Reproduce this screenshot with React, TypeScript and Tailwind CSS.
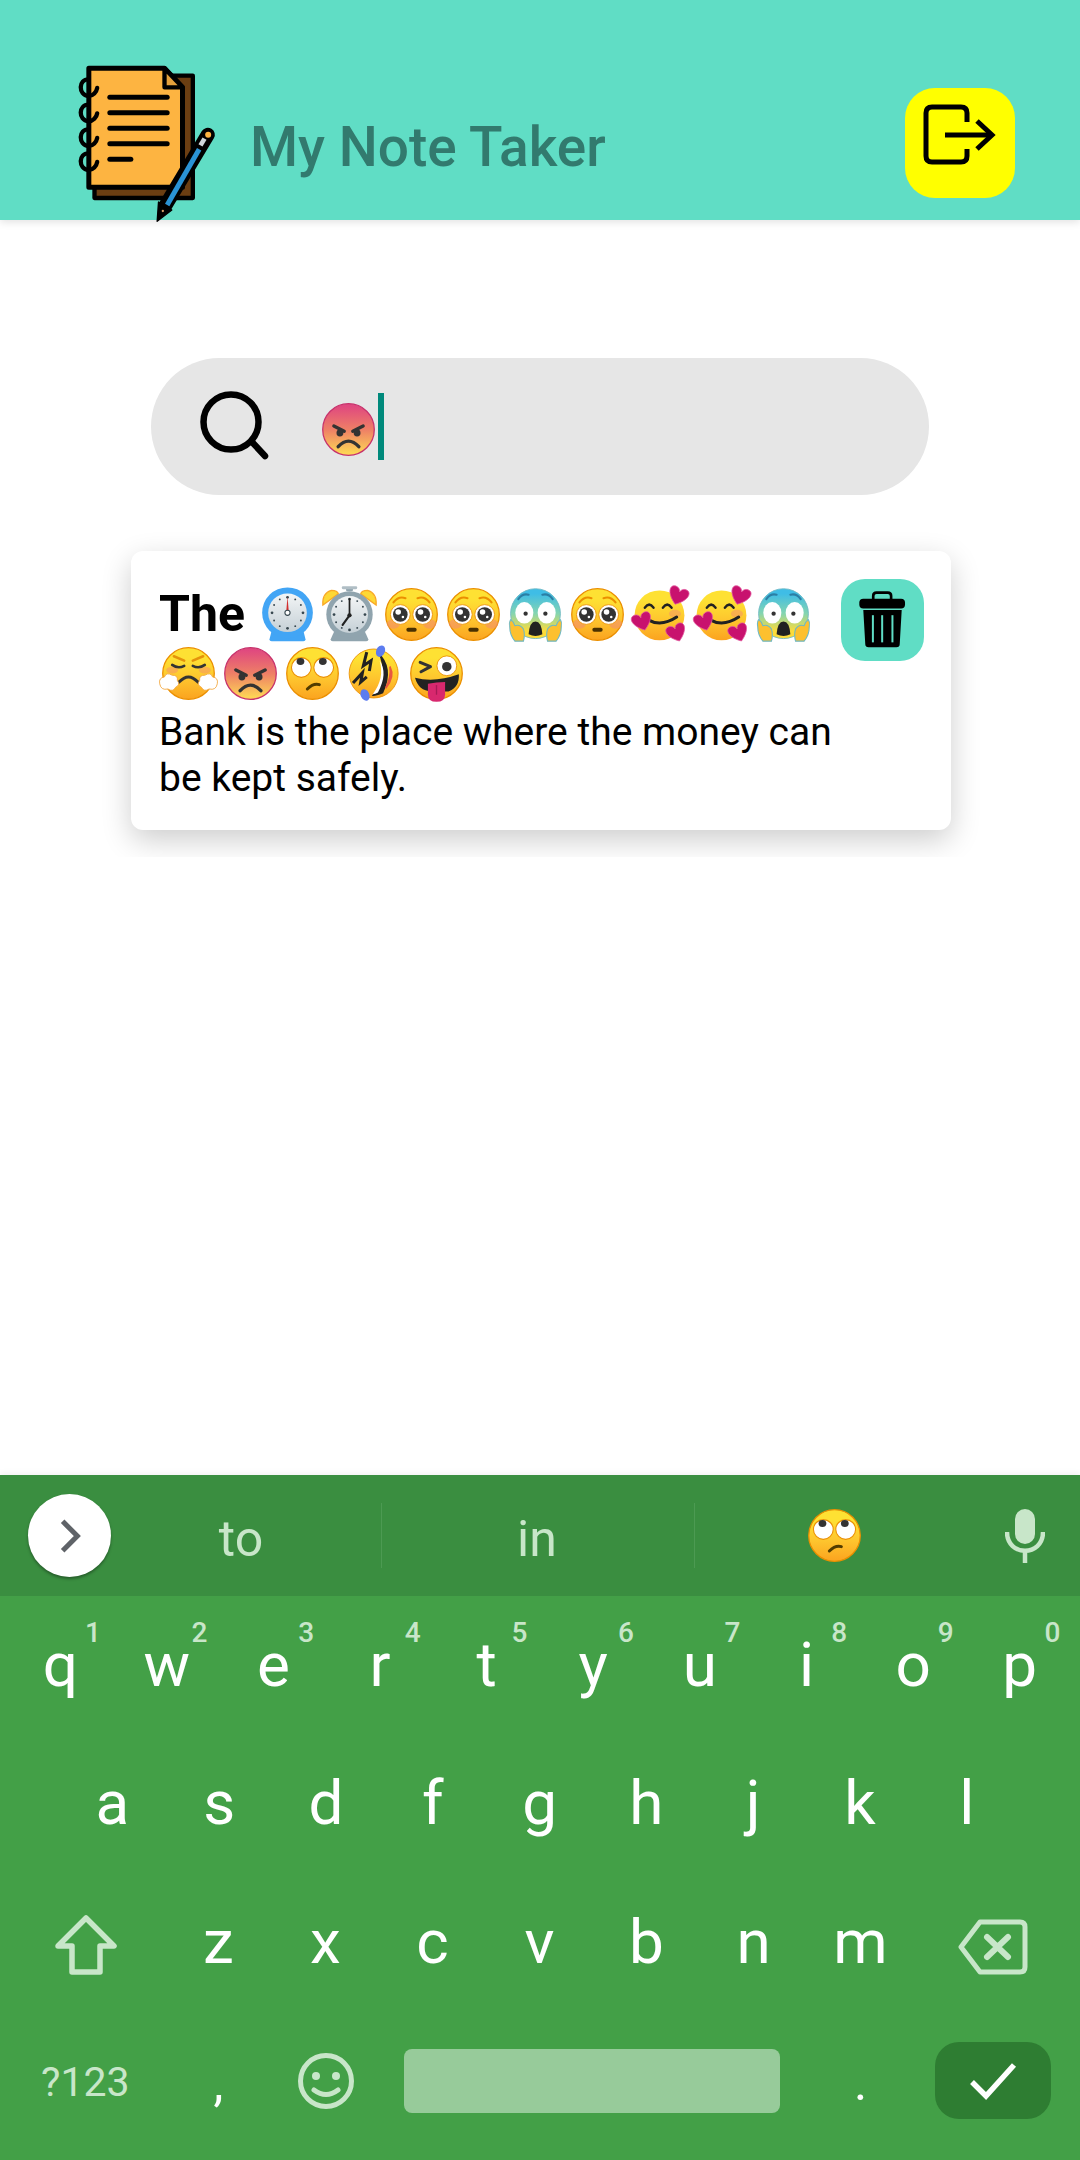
import React from "react";

const Defs = () => (
  <defs>
    <linearGradient id="yel" x1="0" y1="0" x2="0" y2="1">
      <stop offset="0.2" stopColor="#fee133" />
      <stop offset="0.6" stopColor="#fec52e" />
      <stop offset="1" stopColor="#fba31f" />
    </linearGradient>
    <linearGradient id="ang" x1="0" y1="0" x2="0" y2="1">
      <stop offset="0.05" stopColor="#e0497f" />
      <stop offset="0.5" stopColor="#ee7f66" />
      <stop offset="0.95" stopColor="#fdd356" />
    </linearGradient>
    <linearGradient id="fear" x1="0" y1="0" x2="0" y2="1">
      <stop offset="0.1" stopColor="#3fbde6" />
      <stop offset="0.5" stopColor="#85d5b0" />
      <stop offset="0.85" stopColor="#fddc3a" />
    </linearGradient>
    <linearGradient id="steel" x1="0" y1="0" x2="0" y2="1">
      <stop offset="0" stopColor="#f3f5f6" />
      <stop offset="1" stopColor="#c5d0d6" />
    </linearGradient>
  </defs>
);

const E = ({ children, c = "w-[55px] h-[55px]" }: { children: React.ReactNode; c?: string }) => (
  <svg viewBox="0 0 128 128" className={c + " shrink-0 overflow-visible"}>
    <Defs />
    {children}
  </svg>
);

const Face = ({ fill = "url(#yel)", stroke = "#eb8f00" }: { fill?: string; stroke?: string }) => (
  <circle cx="64" cy="64" r="60" fill={fill} stroke={stroke} strokeWidth="3" />
);

const Ticks = ({ cx, cy, r }: { cx: number; cy: number; r: number }) => (
  <g fill="#37474f">
    {Array.from({ length: 12 }).map((_, i) => {
      const a = (i * Math.PI) / 6;
      return <circle key={i} cx={cx + Math.sin(a) * r} cy={cy - Math.cos(a) * r} r={i % 3 === 0 ? 3.2 : 2.2} />;
    })}
  </g>
);

const Mantel = () => (
  <E>
    <path d="M28 98 L22 122 Q22 126 27 126 H101 Q106 126 106 122 L100 98 Z" fill="#42a5f5" />
    <circle cx="64" cy="60" r="59" fill="#42a5f5" />
    <circle cx="64" cy="60" r="45" fill="url(#steel)" />
    <Ticks cx={64} cy={60} r={36} />
    <path d="M64 22 L61 58 H67 Z" fill="#d32f2f" />
    <circle cx="64" cy="60" r="6" fill="#fff" stroke="#37474f" strokeWidth="2.5" />
  </E>
);

const Alarm = () => (
  <E>
    <rect x="56" y="0" width="16" height="10" rx="3" fill="#90a4ae" />
    <rect x="46" y="-2" width="36" height="7" rx="3" fill="#b0bec5" />
    <path d="M2 42 Q0 14 22 8 Q36 8 38 16 Z" fill="#fdd835" stroke="#f9a825" strokeWidth="3" />
    <path d="M126 42 Q128 14 106 8 Q92 8 90 16 Z" fill="#fdd835" stroke="#f9a825" strokeWidth="3" />
    <path d="M28 104 L20 122 Q20 126 25 126 H103 Q108 126 108 122 L100 104 Z" fill="#90a4ae" />
    <circle cx="64" cy="64" r="54" fill="#90a4ae" />
    <circle cx="64" cy="64" r="43" fill="url(#steel)" />
    <Ticks cx={64} cy={64} r={36} />
    <path d="M64 66 V28" stroke="#212121" strokeWidth="4" strokeLinecap="round" />
    <path d="M64 66 L48 88" stroke="#212121" strokeWidth="5" strokeLinecap="round" />
    <circle cx="64" cy="66" r="5" fill="#212121" />
  </E>
);

const BigEye = ({ x }: { x: number }) => (
  <g>
    <circle cx={x} cy="64" r="23" fill="#fff" stroke="#eb8f00" strokeWidth="2" />
    <circle cx={x} cy="64" r="17" fill="#333" />
    <circle cx={x - 5} cy="58" r="6.5" fill="#fff" />
    <circle cx={x + 6} cy="70" r="3" fill="#fff" />
  </g>
);

const Pleading = () => (
  <E>
    <Face />
    <ellipse cx="22" cy="86" rx="15" ry="11" fill="#f48f6c" opacity="0.6" />
    <ellipse cx="106" cy="86" rx="15" ry="11" fill="#f48f6c" opacity="0.6" />
    <path d="M22 36 Q34 20 50 26" fill="none" stroke="#eb8f00" strokeWidth="5" strokeLinecap="round" />
    <path d="M106 36 Q94 20 78 26" fill="none" stroke="#eb8f00" strokeWidth="5" strokeLinecap="round" />
    <BigEye x={38} />
    <BigEye x={90} />
    <rect x="52" y="95" width="24" height="9" rx="4.5" fill="#4a3000" />
  </E>
);

const Fear = () => (
  <E>
    <circle cx="64" cy="62" r="58" fill="url(#fear)" stroke="#6fb8c4" strokeWidth="2" />
    <ellipse cx="38" cy="60" rx="21" ry="25" fill="#fff" />
    <ellipse cx="90" cy="60" rx="21" ry="25" fill="#fff" />
    <circle cx="41" cy="62" r="5" fill="#333" />
    <circle cx="87" cy="62" r="5" fill="#333" />
    <path d="M24 28 Q34 14 48 18" fill="none" stroke="#2b7fa5" strokeWidth="5" strokeLinecap="round" />
    <path d="M104 28 Q94 14 80 18" fill="none" stroke="#2b7fa5" strokeWidth="5" strokeLinecap="round" />
    <path d="M48 110 Q50 80 64 80 Q78 80 80 110 Q64 118 48 110Z" fill="#212121" />
    <path d="M4 92 Q2 82 6 76 Q13 80 16 90 Q28 86 36 98 Q40 110 36 126 H16 Q4 112 4 92Z" fill="#fdc02f" stroke="#6fb8c4" strokeWidth="2.5" />
    <path d="M124 92 Q126 82 122 76 Q115 80 112 90 Q100 86 92 98 Q88 110 92 126 H112 Q124 112 124 92Z" fill="#fdc02f" stroke="#6fb8c4" strokeWidth="2.5" />
  </E>
);

const Heart = ({ x, y, r, s = 1 }: { x: number; y: number; r: number; s?: number }) => (
  <path
    transform={`translate(${x} ${y}) rotate(${r}) scale(${s})`}
    d="M0 20 C-26 2 -24 -16 -11 -16 C-5 -16 -1 -12 0 -7 C1 -12 5 -16 11 -16 C24 -16 26 2 0 20Z"
    fill="#c8126e"
    stroke="#e35aa0"
    strokeWidth="1.5"
  />
);

const Hearts = () => (
  <E>
    <circle cx="64" cy="66" r="58" fill="url(#yel)" />
    <ellipse cx="100" cy="62" rx="14" ry="9" fill="#f48f6c" opacity="0.5" />
    <path d="M30 48 Q40 34 50 48" fill="none" stroke="#222" strokeWidth="6" strokeLinecap="round" />
    <path d="M72 48 Q82 34 92 48" fill="none" stroke="#222" strokeWidth="6" strokeLinecap="round" />
    <path d="M36 76 Q68 94 104 70" fill="none" stroke="#222" strokeWidth="7" strokeLinecap="round" />
    <Heart x={108} y={19} r={20} s={1.12} />
    <Heart x={23} y={79} r={-18} s={1.12} />
    <Heart x={103} y={105} r={-20} s={1.1} />
  </E>
);

const Steam = () => (
  <E>
    <Face />
    <ellipse cx="26" cy="56" rx="14" ry="8" fill="#f48f6c" opacity="0.5" />
    <ellipse cx="102" cy="56" rx="14" ry="8" fill="#f48f6c" opacity="0.5" />
    <path d="M30 24 L54 34" stroke="#e5930c" strokeWidth="6" strokeLinecap="round" />
    <path d="M98 24 L74 34" stroke="#e5930c" strokeWidth="6" strokeLinecap="round" />
    <path d="M26 44 Q40 54 54 46" fill="none" stroke="#333" strokeWidth="6" strokeLinecap="round" />
    <path d="M102 44 Q88 54 74 46" fill="none" stroke="#333" strokeWidth="6" strokeLinecap="round" />
    <path d="M42 84 Q64 60 86 84" fill="none" stroke="#333" strokeWidth="7" strokeLinecap="round" />
    <g fill="#fff" stroke="#f2a73b" strokeWidth="2">
      <path d="M-3 88 Q-6 74 8 72 Q12 60 26 68 Q40 68 38 80 Q46 90 34 96 Q28 108 16 100 Q0 104 -3 88Z" />
      <path d="M131 88 Q134 74 120 72 Q116 60 102 68 Q88 68 90 80 Q82 90 94 96 Q100 108 112 100 Q128 104 131 88Z" />
    </g>
  </E>
);

const Angry = ({ c }: { c?: string }) => (
  <E c={c}>
    <Face fill="url(#ang)" stroke="#c7326c" />
    <path d="M30 56 L54 68" stroke="#333" strokeWidth="8" strokeLinecap="round" />
    <path d="M98 56 L74 68" stroke="#333" strokeWidth="8" strokeLinecap="round" />
    <circle cx="44" cy="72" r="8" fill="#333" />
    <circle cx="84" cy="72" r="8" fill="#333" />
    <path d="M40 104 Q64 78 88 104" fill="none" stroke="#333" strokeWidth="8" strokeLinecap="round" />
  </E>
);

const Eyeroll = ({ c }: { c?: string }) => (
  <E c={c}>
    <Face />
    <circle cx="38" cy="50" r="23" fill="#fff" stroke="#eb8f00" strokeWidth="2.5" />
    <circle cx="90" cy="50" r="23" fill="#fff" stroke="#eb8f00" strokeWidth="2.5" />
    <ellipse cx="36" cy="36" rx="9" ry="8" fill="#333" />
    <ellipse cx="88" cy="36" rx="9" ry="8" fill="#333" />
    <path d="M52 100 Q66 86 80 90" fill="none" stroke="#513c00" strokeWidth="7" strokeLinecap="round" />
  </E>
);

const Rofl = () => (
  <E>
    <circle cx="62" cy="64" r="57" fill="url(#yel)" stroke="#eb8f00" strokeWidth="2" />
    <path d="M72 14 Q112 50 84 110 Q64 118 58 116 Q98 70 72 14Z" fill="#222" />
    <path d="M76 34 Q96 64 72 108 Q66 112 60 112 Q88 76 76 34Z" fill="#fff" />
    <path d="M100 48 Q112 72 90 98 Q104 72 100 48Z" fill="#e9573f" stroke="#e9573f" strokeWidth="4" />
    <path d="M46 14 L38 46 L56 34 L52 58" fill="none" stroke="#222" strokeWidth="7" strokeLinejoin="miter" />
    <path d="M14 86 L36 62 L32 84 L46 72" fill="none" stroke="#222" strokeWidth="7" />
    <ellipse cx="78" cy="12" rx="10" ry="14" fill="#5c7cf0" transform="rotate(25 78 12)" />
    <ellipse cx="42" cy="114" rx="10" ry="14" fill="#5c7cf0" transform="rotate(-25 42 114)" />
  </E>
);

const Wink = () => (
  <E>
    <Face />
    <path d="M26 38 L50 48 L28 60" fill="none" stroke="#333" strokeWidth="7" strokeLinecap="round" strokeLinejoin="round" />
    <circle cx="88" cy="46" r="23" fill="#fff" stroke="#eb8f00" strokeWidth="2" />
    <circle cx="88" cy="48" r="11" fill="#333" />
    <path d="M14 74 Q60 86 116 66 Q118 96 92 106 H52 Q22 104 14 74Z" fill="#222" />
    <path d="M44 88 Q64 84 84 84 L84 112 Q84 130 64 130 Q44 130 44 112Z" fill="#d8286e" />
    <path d="M64 92 V112" stroke="#a81a55" strokeWidth="3" strokeLinecap="round" />
  </E>
);

const Logo = () => (
  <svg viewBox="70 90 440 480" className="w-[147px] h-[160px] shrink-0 overflow-visible">
    <path d="M350 137 H429 V504 H134 V470" fill="#6b3e12" stroke="#000" strokeWidth="13" strokeLinejoin="round" />
    <path d="M117 115 H344 L398 172 V472 H117 Z" fill="#fdb441" stroke="#000" strokeWidth="15" strokeLinejoin="round" />
    <path d="M344 115 V172 H398 Z" fill="#e3a03c" stroke="#000" strokeWidth="13" strokeLinejoin="round" />
    <g stroke="#000" strokeWidth="15" strokeLinecap="round">
      <path d="M180 202 H352" />
      <path d="M180 248 H352" />
      <path d="M180 295 H352" />
      <path d="M180 341 H352" />
      <path d="M180 388 H243" />
    </g>
    <g fill="none" stroke="#000" strokeWidth="13" strokeLinecap="round">
      <path d="M116 148 C86 148 84 194 116 198 C130 198 140 186 142 174" />
      <path d="M116 224 C86 224 84 270 116 274 C130 274 140 262 142 250" />
      <path d="M116 298 C86 298 84 344 116 348 C130 348 140 336 142 324" />
      <path d="M116 370 C86 370 84 416 116 420 C130 420 140 408 142 396" />
    </g>
    <path d="M346 528 L474 314" stroke="#000" strokeWidth="42" strokeLinecap="round" />
    <path d="M322 574 L326 516 L366 540 Z" fill="#000" stroke="#000" strokeWidth="4" strokeLinejoin="round" />
    <path d="M352 525 L448 358" stroke="#2a93d5" strokeWidth="15" />
    <path d="M452 346 L464 326" stroke="#cfd8dc" strokeWidth="14" />
    <circle cx="475" cy="314" r="9" fill="#fdb441" />
    <circle cx="339" cy="543" r="3.5" fill="#d9a06a" />
  </svg>
);

const row1: [string, string][] = [
  ["q", "1"], ["w", "2"], ["e", "3"], ["r", "4"], ["t", "5"],
  ["y", "6"], ["u", "7"], ["i", "8"], ["o", "9"], ["p", "0"],
];
const row2 = ["a", "s", "d", "f", "g", "h", "j", "k", "l"];
const row3 = ["z", "x", "c", "v", "b", "n", "m"];

export default function App() {
  return (
    <div className="h-[2160px] w-[1080px] bg-white flex flex-col overflow-hidden font-['Roboto',sans-serif]">
      {/* Header */}
      <header className="h-[220px] shrink-0 bg-[#60ddc5] flex items-end pl-[73px] pr-[65px] shadow-[0_2px_8px_rgba(0,0,0,0.12)] relative">
        <Logo />
        <h1 className="ml-[30px] mb-[38px] text-[55px] leading-[70px] font-medium text-[#327a6e]">My Note Taker</h1>
        <button className="ml-auto mb-[22px] w-[110px] h-[110px] rounded-[30px] bg-[#ffff00] flex items-center justify-center">
          <svg viewBox="922 100 80 70" className="w-[80px] h-[70px] -mt-[16px]">
            <path d="M969 122 V113 Q969 107 963 107 H934 Q928 107 928 113 V156 Q928 162 934 162 H963 Q969 162 969 156 V149" fill="none" stroke="#000" strokeWidth="5" />
            <path d="M947 135 H992" stroke="#000" strokeWidth="5" />
            <path d="M979 121 L994 135 L979 149" fill="none" stroke="#000" strokeWidth="5" />
          </svg>
        </button>
      </header>

      {/* Search */}
      <div className="mt-[138px] ml-[151px] w-[778px] h-[137px] rounded-full bg-[#e6e6e6] flex items-center pl-[48px]">
        <svg viewBox="0 0 72 72" className="w-[72px] h-[72px] shrink-0">
          <circle cx="32" cy="31" r="27.5" fill="none" stroke="#000" strokeWidth="6.5" />
          <path d="M53 51 L66 65" stroke="#000" strokeWidth="6.5" strokeLinecap="round" />
        </svg>
        <div className="ml-[50px] flex items-center">
          <Angry c="w-[55px] h-[55px] mt-[6px]" />
          <div className="ml-[2px] w-[6px] h-[67px] bg-[#00897b]" />
        </div>
      </div>

      {/* Note list */}
      <div className="mt-[16px] ml-[100px] w-[880px] overflow-hidden pt-[40px] pb-[27px] pl-[31px] pr-[29px]">
        <div className="h-[279px] rounded-[12px] bg-white shadow-[0_10px_30px_rgba(0,0,0,0.2)] flex items-start pl-[28px] pr-[27px] pt-[28px]">
          <div className="w-[671px] pt-[6px]">
            <div className="flex flex-wrap items-center">
              <span className="text-[50px] leading-[59px] font-bold text-black mr-[13px]">The</span>
              {[<Mantel />, <Alarm />, <Pleading />, <Pleading />, <Fear />, <Pleading />, <Hearts />, <Hearts />, <Fear />, <Steam />, <Angry />, <Eyeroll />, <Rofl />, <Wink />].map((e, i) => (
                <span key={i} className="w-[62px] h-[59px] flex items-center pl-[2px]">{e}</span>
              ))}
            </div>
            <p className="mt-[6px] w-[685px] text-[39px] leading-[46px] text-black">Bank is the place where the money can be kept safely.</p>
          </div>
          <button className="ml-auto w-[83px] h-[82px] rounded-[24px] bg-[#60ddc5] flex items-center justify-center shrink-0">
            <svg viewBox="920 150 160 185" className="w-[53px] h-[62px]">
              <path d="M972 182 V170 Q972 160 982 160 H1016 Q1026 160 1026 170 V182" fill="none" stroke="#000" strokeWidth="8" />
              <rect x="930" y="178" width="138" height="30" rx="12" fill="#000" />
              <path d="M942 212 H1058 L1052 316 Q1052 325 1042 325 H958 Q948 325 948 316 Z" fill="#000" />
              <g fill="#60ddc5">
                <rect x="968" y="228" width="6" height="82" />
                <rect x="996" y="228" width="6" height="82" />
                <rect x="1027" y="228" width="6" height="82" />
              </g>
            </svg>
          </button>
        </div>
      </div>

      {/* Keyboard */}
      <div className="mt-auto shrink-0 shadow-[0_-2px_6px_rgba(0,0,0,0.06)]">
        <div className="h-[121px] bg-[#3a8e40] flex items-center relative">
          <div className="ml-[28px] w-[83px] h-[83px] rounded-full bg-white flex items-center justify-center shadow-[0_2px_3px_rgba(0,0,0,0.35)] shrink-0">
            <svg viewBox="0 0 24 36" className="w-[22px] h-[34px]">
              <path d="M4 2 L20 18 L4 34" fill="none" stroke="#5f6368" strokeWidth="5.5" />
            </svg>
          </div>
          <div className="w-[270px] pr-[10px] text-center text-[50px] leading-[60px] text-[#c8e6c9] pt-[6px]">to</div>
          <div className="w-px h-[65px] bg-[#4c9a52]" />
          <div className="w-[312px] pr-[2px] text-center text-[50px] leading-[60px] text-[#c8e6c9] pt-[6px]">in</div>
          <div className="w-px h-[65px] bg-[#4c9a52]" />
          <div className="ml-[112px]"><Eyeroll c="w-[55px] h-[55px]" /></div>
          <svg viewBox="0 0 40 54" className="ml-[143px] w-[40px] h-[54px] shrink-0">
            <rect x="10" y="0" width="20" height="35" rx="10" fill="#c8e6c9" />
            <path d="M2 23 C2 48 38 48 38 23" fill="none" stroke="#c8e6c9" strokeWidth="4.5" />
            <path d="M20 40 V54" stroke="#c8e6c9" strokeWidth="4.5" />
          </svg>
        </div>
        <div className="h-[564px] bg-[#43a047] text-white">
          <div className="h-[138px] grid grid-cols-10 px-[7px] items-center">
            {row1.map(([k, n]) => (
              <div key={k} className="relative text-center text-[62px] leading-[72px]">
                {k}
                <span className="absolute top-[-12px] left-[78px] text-[28px] leading-[32px] font-medium text-[#c8e6c9]">{n}</span>
              </div>
            ))}
          </div>
          <div className="h-[138px] flex items-center pl-[59px]">
            {row2.map((k) => (
              <div key={k} className="w-[106.8px] text-center text-[62px] leading-[72px]">{k}</div>
            ))}
          </div>
          <div className="h-[139px] flex items-center">
            <div className="w-[165px] flex justify-center pl-[6px] pt-[6px]">
              <svg viewBox="0 0 62 60" className="w-[62px] h-[60px]">
                <path d="M31 3 L59 31 H45 V57 H17 V31 H3 Z" fill="none" stroke="#c8e6c9" strokeWidth="5.5" strokeLinejoin="round" />
              </svg>
            </div>
            {row3.map((k) => (
              <div key={k} className="w-[107px] text-center text-[62px] leading-[72px]">{k}</div>
            ))}
            <div className="w-[165px] flex justify-center pr-[8px] pt-[10px]">
              <svg viewBox="0 0 70 56" className="w-[70px] h-[56px]">
                <path d="M22 3 H62 Q67 3 67 8 V48 Q67 53 62 53 H22 L3 28 Z" fill="none" stroke="#c8e6c9" strokeWidth="5" strokeLinejoin="round" />
                <path d="M29 18 L50 38 M50 18 L29 38" stroke="#c8e6c9" strokeWidth="6" strokeLinecap="round" />
              </svg>
            </div>
          </div>
          <div className="h-[149px] flex items-center pb-[10px]">
            <div className="w-[165px] pl-[41px] text-[41px] leading-[50px] text-[#c8e6c9] pt-[2px]">?123</div>
            <div className="w-[107px] text-center text-[50px] leading-[60px] pt-[4px]">,</div>
            <div className="w-[107px] flex justify-center">
              <svg viewBox="0 0 56 56" className="w-[56px] h-[56px]">
                <circle cx="28" cy="28" r="25.5" fill="none" stroke="#c8e6c9" strokeWidth="5" />
                <circle cx="18" cy="23" r="4" fill="#c8e6c9" />
                <circle cx="38" cy="23" r="4" fill="#c8e6c9" />
                <path d="M16 37 Q28 46 40 37" fill="none" stroke="#c8e6c9" strokeWidth="5" strokeLinecap="round" />
              </svg>
            </div>
            <div className="ml-[25px] w-[376px] h-[64px] rounded-[8px] bg-[#97cb9a]" />
            <div className="ml-[27px] w-[107px] text-center text-[50px] leading-[60px] pt-[4px]">.</div>
            <div className="ml-[21px] w-[116px] h-[77px] rounded-[24px] bg-[#2e7d32] flex items-center justify-center">
              <svg viewBox="0 0 48 38" className="w-[48px] h-[38px]">
                <path d="M3 20 L17 34 L45 3" fill="none" stroke="#fff" strokeWidth="5.5" />
              </svg>
            </div>
          </div>
        </div>
      </div>
    </div>
  );
}
